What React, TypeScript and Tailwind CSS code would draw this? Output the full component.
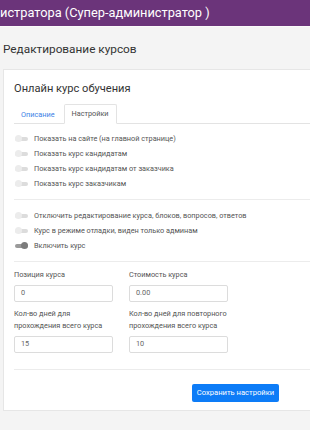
import React from "react";

const visibility = [
  { label: "Показать на сайте (на главной странице)", on: false },
  { label: "Показать курс кандидатам", on: false },
  { label: "Показать курс кандидатам от заказчика", on: false },
  { label: "Показать курс заказчикам", on: false },
];

const modes = [
  { label: "Отключить редактирование курса, блоков, вопросов, ответов", on: false },
  { label: "Курс в режиме отладки, виден только админам", on: false },
  { label: "Включить курс", on: true },
];

function Toggle({ on }: { on: boolean }) {
  return (
    <span className="relative inline-flex h-[6px] w-[13px] shrink-0 items-center">
      <span
        className={
          on
            ? "h-[4px] w-full rounded-full bg-[#9a9a9a]"
            : "h-[4px] w-full rounded-full bg-[#dcdcdc]"
        }
      />
      <span
        className={
          on
            ? "absolute right-0 h-[7px] w-[7px] rounded-full bg-[#7c7c7c]"
            : "absolute left-0 h-[7px] w-[7px] rounded-full bg-[#ececec]"
        }
      />
    </span>
  );
}

function ToggleRow({ label, on }: { label: string; on: boolean }) {
  return (
    <div className="flex h-[15px] items-center gap-[6px] pl-[1px]">
      <Toggle on={on} />
      <span className="whitespace-nowrap text-[7.3px] leading-none text-[#555]">{label}</span>
    </div>
  );
}

function Field({ label, value }: { label: React.ReactNode; value: string }) {
  return (
    <div className="flex w-[99px] flex-col">
      <div className="mb-[4px] whitespace-nowrap text-[7.3px] leading-[12px] text-[#555]">{label}</div>
      <div className="flex h-[17px] items-center rounded-[2px] border border-[#dcdcdc] bg-white px-[6px] text-[7.3px] text-[#666]">
        {value}
      </div>
    </div>
  );
}

export default function App() {
  return (
    <div
      className="h-[430px] w-[310px] overflow-hidden bg-[#f4f4f4]"
      style={{ fontFamily: 'Roboto, "Open Sans", sans-serif' }}
    >
      <header className="flex h-[27px] items-center border-b border-[#fafafa] bg-[#6b347a] whitespace-nowrap text-[12.8px] text-white">
        истратора (Супер-администратор )
      </header>

      <h1 className="ml-[3px] mt-[13px] text-[11.8px] leading-[18px] text-[#333]">
        Редактирование курсов
      </h1>

      <section className="ml-[3px] mt-[11px] w-[330px] border border-[#e6e6e6] bg-white pb-[8px]">
        <h2 className="ml-[10px] mt-[11px] text-[11.1px] leading-[16px] text-[#333]">
          Онлайн курс обучения
        </h2>

        <div className="ml-[10px] mt-[8px] flex h-[19px] items-end border-b border-[#e3e3e3]">
          <span className="mb-[5px] ml-[7px] mr-[9px] text-[7.3px] leading-none text-[#3d82e6]">
            Описание
          </span>
          <span className="-mb-px flex h-[20px] w-[53px] items-center justify-center rounded-t-[2px] border border-b-white border-[#e3e3e3] bg-white text-[7.3px] text-[#555]">
            Настройки
          </span>
        </div>

        <div className="ml-[10px] mt-[7px]">
          {visibility.map((r) => (
            <ToggleRow key={r.label} label={r.label} on={r.on} />
          ))}
        </div>

        <hr className="ml-[10px] mt-[8px] border-[#ececec]" />

        <div className="ml-[10px] mt-[8px]">
          {modes.map((r) => (
            <ToggleRow key={r.label} label={r.label} on={r.on} />
          ))}
        </div>

        <hr className="ml-[10px] mt-[8px] border-[#ececec]" />

        <div className="ml-[10px] mt-[7px] grid w-[214px] grid-cols-2 gap-x-[16px] gap-y-[6px]">
          <Field label="Позиция курса" value="0" />
          <Field label="Стоимость курса" value="0.00" />
          <Field
            label={
              <>
                Кол-во дней для
                <br />
                прохождения всего курса
              </>
            }
            value="15"
          />
          <Field
            label={
              <>
                Кол-во дней для повторного
                <br />
                прохождения всего курса
              </>
            }
            value="10"
          />
        </div>

        <hr className="ml-[10px] mt-[16px] border-[#ececec]" />

        <div className="ml-[188px] mt-[8px]">
          <button className="h-[18px] w-[87px] rounded-[2px] bg-[#0d7cf7] text-[7.6px] text-white">
            Сохранить настройки
          </button>
        </div>
      </section>
    </div>
  );
}
